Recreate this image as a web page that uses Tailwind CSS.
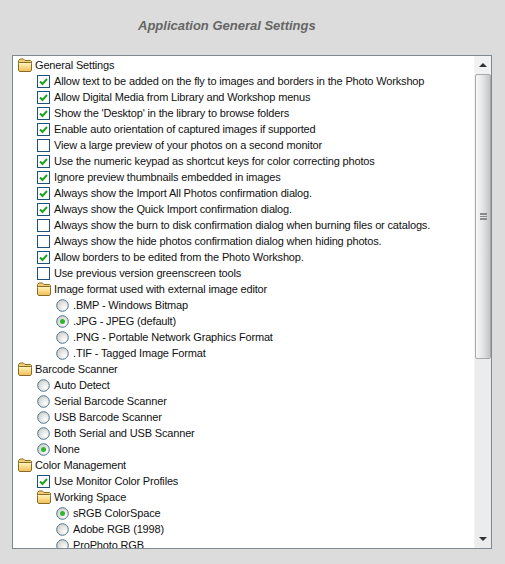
<!DOCTYPE html>
<html lang="en">

<head>
    <meta charset="UTF-8">
    <title>Application General Settings</title>
    <script src="https://cdn.jsdelivr.net/npm/@tailwindcss/browser@4"></script>
</head>

<body class="w-[505px] h-[564px] overflow-hidden bg-[#dcdcdc] font-['Liberation_Sans',sans-serif]">
    <svg class="absolute w-0 h-0">
        <defs>
            <linearGradient id="fold" x1="0" y1="0" x2="0" y2="1">
                <stop offset="0" stop-color="#fff7c4" />
                <stop offset="1" stop-color="#f0bd50" />
            </linearGradient>
            <radialGradient id="rad" cx="0.7" cy="0.7" r="0.8">
                <stop offset="0" stop-color="#ffffff" />
                <stop offset="1" stop-color="#cfcdc5" />
            </radialGradient>
            <symbol id="folder" viewBox="0 0 16 14">
                <path d="M1.500 4V2.500L3 1h3.500L8 2.500h5.500l1 1V5h-13z" fill="#f3cf74" stroke="#8a6a24" />
                <path d="M1.500 12V5.500l1-1h11l1 1V12l-1 1.500h-11z" fill="url(#fold)" stroke="#8a6a24" />
            </symbol>
            <symbol id="check" viewBox="0 0 13 13">
                <rect x=".5" y=".5" width="12" height="12" fill="#fff" stroke="#1c5180" />
                <path d="M3 6.500l2.500 2.500L10 4" fill="none" stroke="#21a121" stroke-width="2" />
            </symbol>
            <symbol id="box" viewBox="0 0 13 13">
                <rect x=".5" y=".5" width="12" height="12" fill="#fff" stroke="#1c5180" />
            </symbol>
            <symbol id="radio" viewBox="0 0 13 13">
                <circle cx="6.500" cy="6.500" r="5.800" fill="url(#rad)" stroke="#4d7398" />
            </symbol>
            <symbol id="radio-on" viewBox="0 0 13 13">
                <circle cx="6.500" cy="6.500" r="5.800" fill="url(#rad)" stroke="#4d7398" />
                <circle cx="6.500" cy="6.500" r="2.500" fill="#2fb52f" />
            </symbol>
        </defs>
    </svg>

    <h1 class="h-[55px] pt-[17px] pl-[138px] text-[13px] leading-[18px] font-bold italic text-[#666]">Application General Settings</h1>

    <div class="ml-[12px] w-[480px] h-[494px] flex bg-white border border-[#7f8a90]">
        <div class="flex-1 overflow-hidden pt-[1px] text-[11px] leading-[16px] tracking-[-0.16px] text-[#111] whitespace-nowrap">
            <div class="h-[16px] flex items-center pl-[4px] gap-[2px]"><svg class="w-[16px] h-[14px]"><use href="#folder" /></svg>General Settings</div>
            <div class="h-[16px] flex items-center pl-[24px] gap-[4px]"><svg class="w-[13px] h-[13px]"><use href="#check" /></svg>Allow text to be added on the fly to images and borders in the Photo Workshop</div>
            <div class="h-[16px] flex items-center pl-[24px] gap-[4px]"><svg class="w-[13px] h-[13px]"><use href="#check" /></svg>Allow Digital Media from Library and Workshop menus</div>
            <div class="h-[16px] flex items-center pl-[24px] gap-[4px]"><svg class="w-[13px] h-[13px]"><use href="#check" /></svg>Show the 'Desktop' in the library to browse folders</div>
            <div class="h-[16px] flex items-center pl-[24px] gap-[4px]"><svg class="w-[13px] h-[13px]"><use href="#check" /></svg>Enable auto orientation of captured images if supported</div>
            <div class="h-[16px] flex items-center pl-[24px] gap-[4px]"><svg class="w-[13px] h-[13px]"><use href="#box" /></svg>View a large preview of your photos on a second monitor</div>
            <div class="h-[16px] flex items-center pl-[24px] gap-[4px]"><svg class="w-[13px] h-[13px]"><use href="#check" /></svg>Use the numeric keypad as shortcut keys for color correcting photos</div>
            <div class="h-[16px] flex items-center pl-[24px] gap-[4px]"><svg class="w-[13px] h-[13px]"><use href="#check" /></svg>Ignore preview thumbnails embedded in images</div>
            <div class="h-[16px] flex items-center pl-[24px] gap-[4px]"><svg class="w-[13px] h-[13px]"><use href="#check" /></svg>Always show the Import All Photos confirmation dialog.</div>
            <div class="h-[16px] flex items-center pl-[24px] gap-[4px]"><svg class="w-[13px] h-[13px]"><use href="#check" /></svg>Always show the Quick Import confirmation dialog.</div>
            <div class="h-[16px] flex items-center pl-[24px] gap-[4px]"><svg class="w-[13px] h-[13px]"><use href="#box" /></svg>Always show the burn to disk confirmation dialog when burning files or catalogs.</div>
            <div class="h-[16px] flex items-center pl-[24px] gap-[4px]"><svg class="w-[13px] h-[13px]"><use href="#box" /></svg>Always show the hide photos confirmation dialog when hiding photos.</div>
            <div class="h-[16px] flex items-center pl-[24px] gap-[4px]"><svg class="w-[13px] h-[13px]"><use href="#check" /></svg>Allow borders to be edited from the Photo Workshop.</div>
            <div class="h-[16px] flex items-center pl-[24px] gap-[4px]"><svg class="w-[13px] h-[13px]"><use href="#box" /></svg>Use previous version greenscreen tools</div>
            <div class="h-[16px] flex items-center pl-[23px] gap-[2px]"><svg class="w-[16px] h-[14px]"><use href="#folder" /></svg>Image format used with external image editor</div>
            <div class="h-[16px] flex items-center pl-[43px] gap-[4px]"><svg class="w-[13px] h-[13px]"><use href="#radio" /></svg>.BMP - Windows Bitmap</div>
            <div class="h-[16px] flex items-center pl-[43px] gap-[4px]"><svg class="w-[13px] h-[13px]"><use href="#radio-on" /></svg>.JPG - JPEG (default)</div>
            <div class="h-[16px] flex items-center pl-[43px] gap-[4px]"><svg class="w-[13px] h-[13px]"><use href="#radio" /></svg>.PNG - Portable Network Graphics Format</div>
            <div class="h-[16px] flex items-center pl-[43px] gap-[4px]"><svg class="w-[13px] h-[13px]"><use href="#radio" /></svg>.TIF - Tagged Image Format</div>
            <div class="h-[16px] flex items-center pl-[4px] gap-[2px]"><svg class="w-[16px] h-[14px]"><use href="#folder" /></svg>Barcode Scanner</div>
            <div class="h-[16px] flex items-center pl-[24px] gap-[4px]"><svg class="w-[13px] h-[13px]"><use href="#radio" /></svg>Auto Detect</div>
            <div class="h-[16px] flex items-center pl-[24px] gap-[4px]"><svg class="w-[13px] h-[13px]"><use href="#radio" /></svg>Serial Barcode Scanner</div>
            <div class="h-[16px] flex items-center pl-[24px] gap-[4px]"><svg class="w-[13px] h-[13px]"><use href="#radio" /></svg>USB Barcode Scanner</div>
            <div class="h-[16px] flex items-center pl-[24px] gap-[4px]"><svg class="w-[13px] h-[13px]"><use href="#radio" /></svg>Both Serial and USB Scanner</div>
            <div class="h-[16px] flex items-center pl-[24px] gap-[4px]"><svg class="w-[13px] h-[13px]"><use href="#radio-on" /></svg>None</div>
            <div class="h-[16px] flex items-center pl-[4px] gap-[2px]"><svg class="w-[16px] h-[14px]"><use href="#folder" /></svg>Color Management</div>
            <div class="h-[16px] flex items-center pl-[24px] gap-[4px]"><svg class="w-[13px] h-[13px]"><use href="#check" /></svg>Use Monitor Color Profiles</div>
            <div class="h-[16px] flex items-center pl-[23px] gap-[2px]"><svg class="w-[16px] h-[14px]"><use href="#folder" /></svg>Working Space</div>
            <div class="h-[16px] flex items-center pl-[43px] gap-[4px]"><svg class="w-[13px] h-[13px]"><use href="#radio-on" /></svg>sRGB ColorSpace</div>
            <div class="h-[16px] flex items-center pl-[43px] gap-[4px]"><svg class="w-[13px] h-[13px]"><use href="#radio" /></svg>Adobe RGB (1998)</div>
            <div class="h-[16px] flex items-center pl-[43px] gap-[4px]"><svg class="w-[13px] h-[13px]"><use href="#radio" /></svg>ProPhoto RGB</div>
        </div>

        <div class="w-[17px] flex flex-col bg-[#ececec] border-l border-[#f4f4f4]">
            <div class="h-[18px] flex items-center justify-center bg-[#f1f1f1]">
                <div class="w-0 h-0 border-x-[4px] border-x-transparent border-b-[4px] border-b-[#333]"></div>
            </div>
            <div class="h-[285px] flex items-center justify-center rounded-[2px] border border-[#a9a9a9] bg-gradient-to-r from-[#f8f8f8] via-[#e4e4e4] to-[#c4c4c4]">
                <div class="w-[7px] h-[7px] border-y border-[#8a8a8a] bg-[linear-gradient(#8a8a8a_1px,transparent_1px)] bg-[size:100%_2px]"></div>
            </div>
            <div class="flex-1"></div>
            <div class="h-[18px] flex items-center justify-center">
                <div class="w-0 h-0 border-x-[4px] border-x-transparent border-t-[4px] border-t-[#333]"></div>
            </div>
        </div>
    </div>
</body>

</html>
